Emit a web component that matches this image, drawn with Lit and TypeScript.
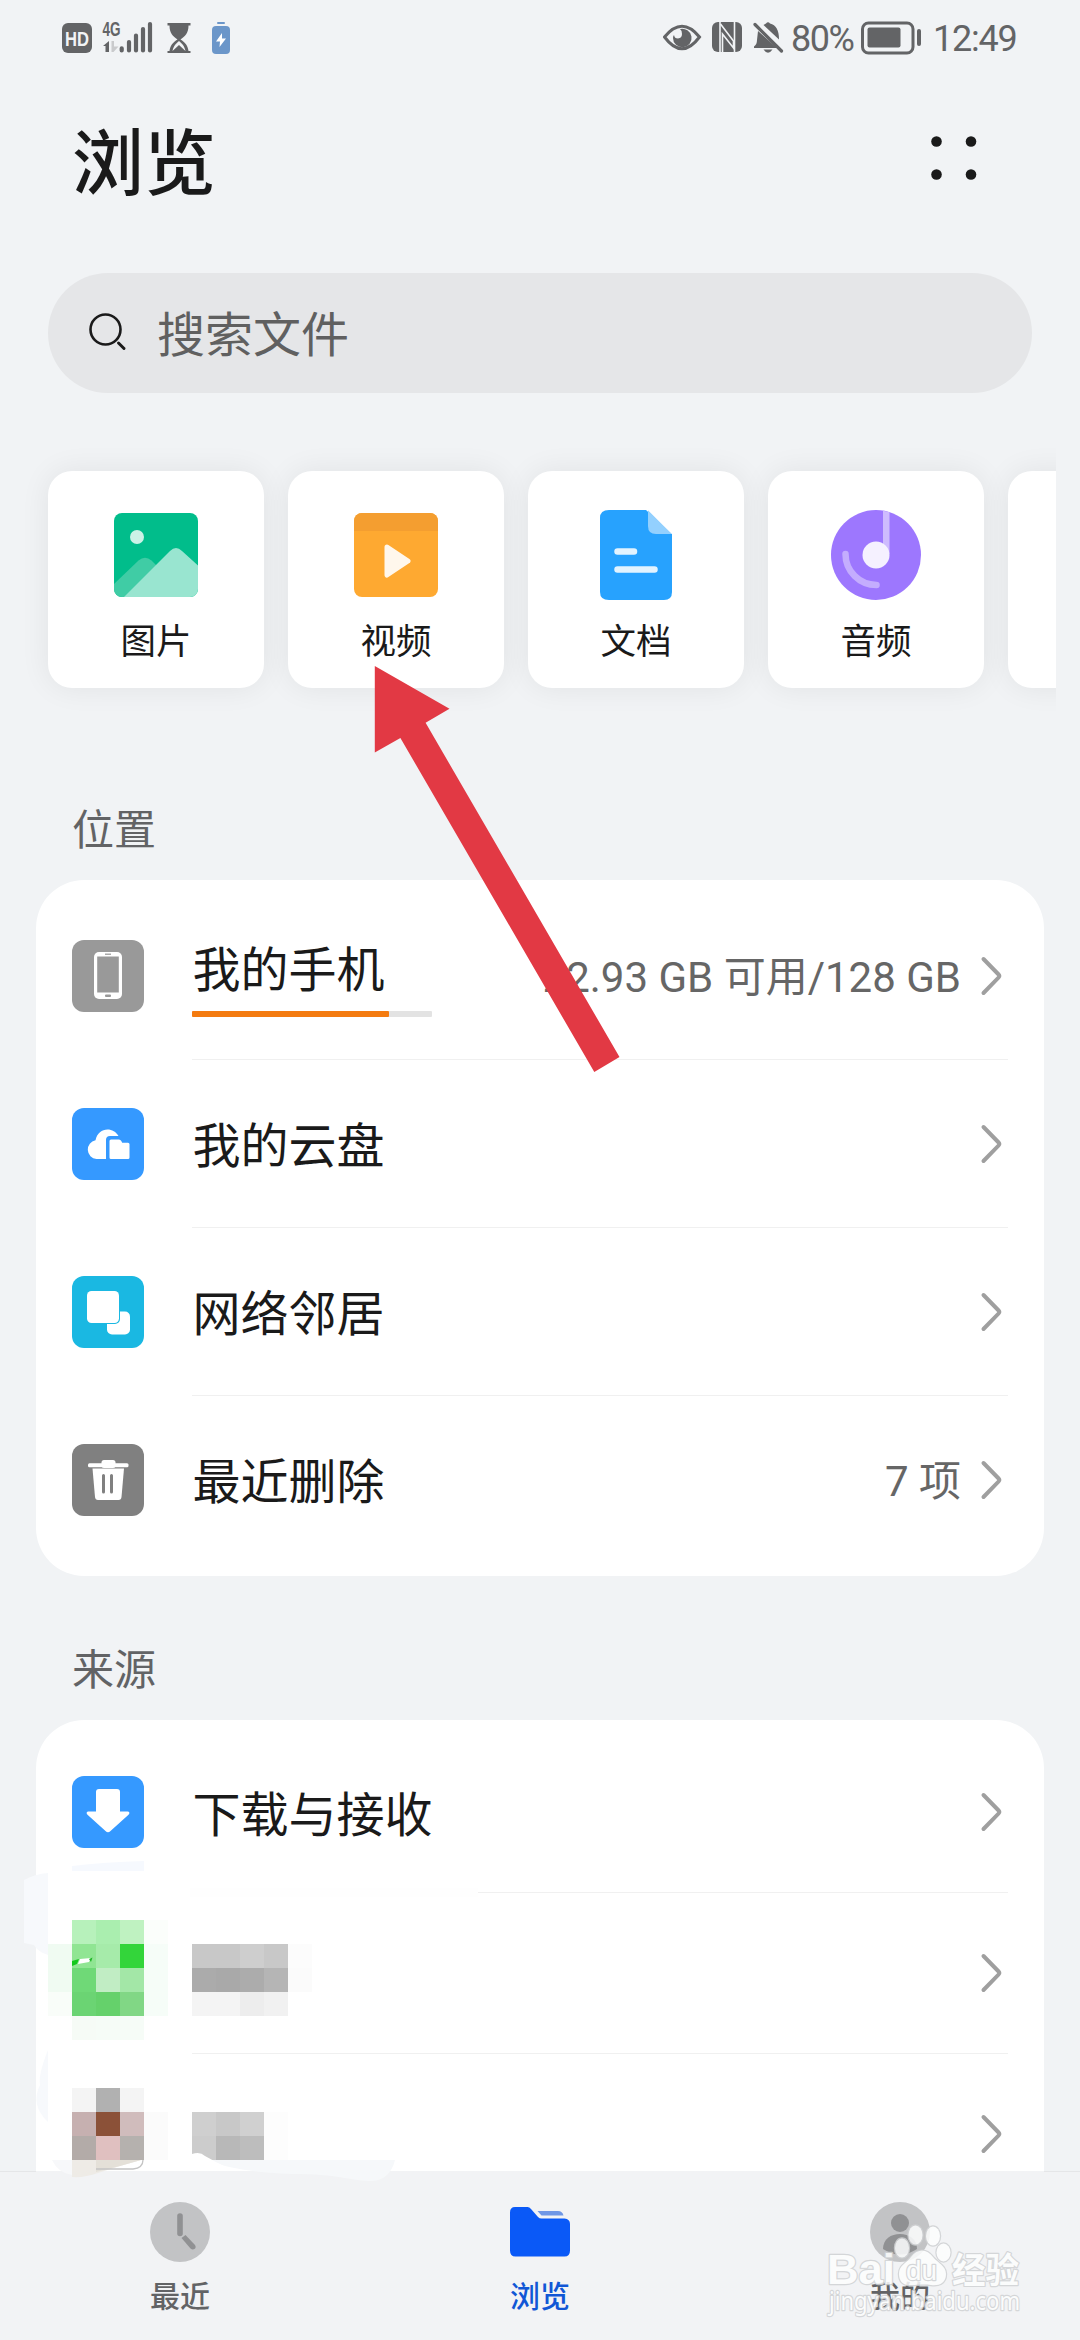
import { LitElement, html, svg, css, nothing } from "lit";
import { customElement, property } from "lit/decorators.js";

type Tile = { label: string; icon: unknown };
type Entry = { label: string; icon?: unknown; value?: string; used?: number };

const tileIcons = {
  picture: svg`
    <clipPath id="pic"><rect x="3" y="3" width="84" height="84" rx="8"/></clipPath>
    <g clip-path="url(#pic)">
      <rect x="3" y="3" width="84" height="84" fill="#01bd8b"/>
      <path d="M0 77 L27.500 50.500 Q34 45 40.500 50.500 L47 57 L18 90 H0Z" fill="#40cca5"/>
      <path d="M12 88 L59 41 Q65 35 71 41 L92 60 V90 H10Z" fill="#99e5d0"/>
      <circle cx="26" cy="27" r="7" fill="#ccf2e7"/>
    </g>`,
  video: svg`
    <clipPath id="vid"><rect x="3" y="3" width="84" height="84" rx="8"/></clipPath>
    <g clip-path="url(#vid)">
      <rect x="3" y="3" width="84" height="84" fill="#fea931"/>
      <rect x="3" y="3" width="84" height="18" fill="#f49e30"/>
    </g>
    <path d="M36 37 L57 51 L36 65Z" fill="#fff7ec" stroke="#fff7ec" stroke-width="5" stroke-linejoin="round"/>`,
  doc: svg`
    <path d="M18 0 H55 L81 24 V82 Q81 90 73 90 H18 Q9 90 9 82 V8 Q9 0 18 0Z" fill="#27a2fe"/>
    <path d="M57 0 L81 24 H65 Q57 24 57 16Z" fill="#93d0fe"/>
    <path d="M57 0 L81 24 V-1Z" fill="#fff"/>
    <path d="M26.500 41.500 H43 M26.500 59.500 H63.500" stroke="#e2f3ff" stroke-width="6.500" stroke-linecap="round"/>`,
  audio: svg`
    <circle cx="45" cy="45" r="45" fill="#9d77fe"/>
    <path d="M52 0.800 Q56 1.500 58.500 2.300 V44 H52Z" fill="#cebbfe"/>
    <path d="M14.500 44 A31 31 0 0 0 45.500 75" fill="none" stroke="#c4adfe" stroke-width="6.500" stroke-linecap="round"/>
    <circle cx="45" cy="45" r="13.500" fill="#f5f1ff"/>`,
};

const rowIcons = {
  phone: svg`
    <rect width="72" height="72" rx="12" fill="#999"/>
    <rect x="22" y="12" width="28" height="47" rx="5" fill="#fff"/>
    <rect x="25.200" y="16.500" width="21.600" height="36" fill="#999"/>
    <rect x="33" y="13.500" width="6" height="1.500" fill="#aaa"/>
    <rect x="33" y="54.500" width="6" height="2.600" rx="1" fill="#999"/>`,
  cloud: svg`
    <rect width="72" height="72" rx="12" fill="#3599ff"/>
    <path d="M34 51 H24.500 A9.500 9.500 0 0 1 23.500 32.200 C25 25 30 21.500 35.500 21.500 C40 21.500 44 23.800 46.500 28 H38 Q34 28 34 32Z" fill="#fff"/>
    <path d="M39 31.500 H47 Q48.500 31.500 49.300 33 L50.200 34.800 H56 Q57.500 34.800 57.500 36.300 V49.500 Q57.500 51 56 51 H39 Q37.500 51 37.500 49.500 V33 Q37.500 31.500 39 31.500Z" fill="#fff"/>`,
  network: svg`
    <rect width="72" height="72" rx="12" fill="#1ab8e2"/>
    <rect x="35" y="35.500" width="23" height="23" rx="5" fill="#fff"/>
    <rect x="14.500" y="14.500" width="33.500" height="33.500" rx="5" fill="#1ab8e2"/>
    <rect x="15" y="15" width="32" height="32" rx="4.500" fill="#fff"/>`,
  trash: svg`
    <rect width="72" height="72" rx="12" fill="#808080"/>
    <rect x="29.500" y="16" width="14" height="8" rx="2.500" fill="#fff"/>
    <rect x="16" y="19.200" width="40.500" height="4" rx="1.500" fill="#fff"/>
    <path d="M20.500 24.500 H52 L49.500 53 Q49.200 56 46.500 56 H26 Q23.300 56 23 53Z" fill="#fff"/>
    <path d="M31.500 31.500 V48 M39.500 31.500 V48" stroke="#808080" stroke-width="3" stroke-linecap="round"/>`,
  download: svg`
    <rect width="72" height="72" rx="12" fill="#3599ff"/>
    <path d="M27 13 H45 Q48 13 48 16 V35.500 H56 Q58.500 36.500 56.500 38.700 L38.500 55 Q36 57.500 33.500 55 L15.500 38.700 Q13.500 36.500 16 35.500 H24 V16 Q24 13 27 13Z" fill="#fff"/>`,
};

@customElement("file-row")
class FileRow extends LitElement {
  @property({ attribute: false }) entry: Entry = { label: "" };

  static styles = css`
    :host { display: flex; align-items: center; box-sizing: border-box; padding: 0 36px; }
    .icon { width: 72px; height: 72px; margin: -1px 48px 0 0; flex: none; }
    .body {
      flex: 1; height: 100%; display: flex; align-items: center; box-sizing: border-box;
      border-bottom: 1px solid #f0f0f0; padding-right: 5px;
    }
    :host([last]) .body { border-bottom-color: transparent; }
    .main { flex: 1; display: flex; flex-direction: column; gap: 15px; margin-bottom: 3px; }
    .main.metered { margin-bottom: 0; }
    .label { font-size: 48px; line-height: 60px; color: #1a1a1a; white-space: nowrap; margin-left: 0.5px; }
    .meter { width: 240px; height: 6px; border-radius: 1px; background: #e3e3e3; margin-bottom: -1px; }
    .used { height: 6px; border-radius: 1px; background: #f47b10; }
    .value {
      font: 42px/60px Roboto, "Noto Sans CJK SC", sans-serif; color: #666; white-space: nowrap;
      margin: 4px 18px 0 0;
    }
    .chevron { width: 24px; height: 42px; flex: none; }
  `;

  render() {
    const { label, icon, value, used } = this.entry;
    const metered = used !== undefined;
    return html`
      <svg class="icon" viewBox="0 0 72 72">${icon ?? nothing}</svg>
      <div class="body">
        <div class="main ${metered ? "metered" : ""}">
          <span class="label">${label}</span>
          ${metered
            ? html`<div class="meter"><div class="used" style="width:${used}%"></div></div>`
            : nothing}
        </div>
        ${value ? html`<span class="value">${value}</span>` : nothing}
        <svg class="chevron" viewBox="0 0 24 42">
          <path d="M4.500 4 L19.600 19.500 Q21 21 19.600 22.500 L4.500 38" fill="none" stroke="#9f9f9f" stroke-width="4" stroke-linecap="round"/>
        </svg>
      </div>`;
  }
}

@customElement("status-bar")
class StatusBar extends LitElement {
  static styles = css`
    :host {
      display: flex; justify-content: space-between; height: 78px; box-sizing: border-box;
      padding: 0 62px; color: #636466;
    }
    .group { display: flex; align-items: center; }
    .glyphs { height: 78px; display: block; flex: none; }
    .text { font: 36px/50px Roboto, sans-serif; white-space: nowrap; flex: none; }
    .hd { font: 700 20px "Liberation Sans", sans-serif; }
    .net { font: 700 20px "Liberation Sans", sans-serif; }
    .percent { width: 70px; letter-spacing: -1.5px; }
    .clock { width: 85px; margin-left: 11px; letter-spacing: -1.2px; }
  `;

  render() {
    return html`
      <div class="group">
        <svg class="glyphs" width="180" viewBox="62 0 180 78" fill="#636466">
          <rect x="62" y="23" width="30" height="30" rx="6"/>
          <text class="hd" x="65" y="45.500" textLength="24" lengthAdjust="spacingAndGlyphs" fill="#f1f3f5">HD</text>
          <text class="net" x="102.500" y="36" textLength="18" lengthAdjust="spacingAndGlyphs">4G</text>
          <path d="M103 46 L109 41 V52 H105.500 V46Z"/>
          <path d="M111.500 41 H114 V46.500 H118.500 L113.500 52 H111.500Z" fill="#c9cacc"/>
          <g stroke="#636466" stroke-width="4.200" stroke-linecap="round">
            <path d="M121.700 48.300 V50.500 M129 42 V50.500 M136 35.500 V50.500 M143 29 V50.500 M150 24 V50.500"/>
          </g>
          <path d="M167.500 23 H190.500 V25.500 H188.500 C188.500 33 185 36.500 180.500 39.500 C185 42 188 46 188.500 51 H190.500 V53 H167.500 V51 H169.500 C170 46 173 42 177.500 39.500 C173 36.500 169.500 33 169.500 25.500 H167.500Z"/>
          <path d="M172.500 51 C173.500 46 176 43.500 179 41 C182 43.500 184.500 46 185.500 51 L179 45Z" fill="#f1f3f5"/>
          <rect x="217" y="22" width="8" height="2" rx="1" fill="#6b96c9"/>
          <rect x="212" y="26" width="18" height="28" rx="4" fill="#6b96c9"/>
          <path d="M222 33 L216 41.500 H220 L219.500 47 L226 38.500 H222Z" fill="#fff"/>
        </svg>
      </div>
      <div class="group">
        <svg class="glyphs" width="128" viewBox="663 0 128 78" fill="#636466">
          <path d="M664.500 37 Q682 15.500 699.500 37 Q682 60.500 664.500 37Z" fill="none" stroke="#636466" stroke-width="3"/>
          <path d="M680 29 A9.300 9.300 0 1 1 673 38 Q673 36 674 35 Q674.500 38.500 678 38.500 Q682 38 682 34 Q682.500 31 680 29Z"/>
          <rect x="712" y="22" width="30" height="30" rx="6"/>
          <path d="M720 22 V52 M734.500 22 V52" stroke="#f1f3f5" stroke-width="1.600"/>
          <path d="M720.500 24 L733.500 41 V48 L722.500 34 V52" fill="none" stroke="#f1f3f5" stroke-width="1.600"/>
          <path d="M766 23.500 Q768 21 770 23.500 C776 25 779 30 779 39.500 L763.500 25Z"/>
          <path d="M758 31 L777 48 H754 V46.500 Q757 44.500 757 40Z"/>
          <path d="M763.500 49.500 H772.500 Q768 56 763.500 49.500Z"/>
          <path d="M755 24.500 L781.500 51" stroke="#636466" stroke-width="3.200" stroke-linecap="round"/>
        </svg>
        <span class="text percent">80%</span>
        <svg class="glyphs" width="61" viewBox="861 0 61 78">
          <rect x="862.500" y="23" width="50.500" height="30" rx="6" fill="none" stroke="#636466" stroke-width="3"/>
          <rect x="867.500" y="27.500" width="33" height="20" rx="2" fill="#636466"/>
          <rect x="917" y="29" width="4" height="17" rx="2" fill="#636466"/>
        </svg>
        <span class="text clock">12:49</span>
      </div>`;
  }
}

@customElement("app-root")
class AppRoot extends LitElement {
  private tiles: Tile[] = [
    { label: "图片", icon: tileIcons.picture },
    { label: "视频", icon: tileIcons.video },
    { label: "文档", icon: tileIcons.doc },
    { label: "音频", icon: tileIcons.audio },
    { label: "", icon: nothing },
  ];

  private places: Entry[] = [
    { label: "我的手机", icon: rowIcons.phone, value: "22.93 GB 可用/128 GB", used: 82 },
    { label: "我的云盘", icon: rowIcons.cloud },
    { label: "网络邻居", icon: rowIcons.network },
    { label: "最近删除", icon: rowIcons.trash, value: "7 项" },
  ];

  private sources: Entry[] = [
    { label: "下载与接收", icon: rowIcons.download },
    { label: "" },
    { label: "" },
  ];

  // Pixelated blocks: x, y and the fills of consecutive 24px cells.
  private mosaic: [number, number, string[]][] = [
    [72, 1920, ["#b7f1bb", "#aaeeaf", "#bff2c1", "#fbfefb"]],
    [48, 1944, ["#f0fbf2", "#90e593", "#a6ebaa", "#33d53a", "#f6fdf8"]],
    [48, 1968, ["#f0fbf2", "#6fd977", "#c1edc4", "#a3e7a7", "#f6fdf8"]],
    [48, 1992, ["#f9fdf9", "#6bd473", "#65d16b", "#81d785", "#f6fdf8"]],
    [72, 2016, ["#f6fbf6", "#f6fcf7", "#f6fcf7"]],
    [192, 1944, ["#c8c8c8", "#c8c8c8", "#cecece", "#c8c8c8", "#fcfcfc"]],
    [192, 1968, ["#ababab", "#a9a9a9", "#acacac", "#b5b5b5", "#fbfbfb"]],
    [192, 1992, ["#f4f4f4", "#f4f4f4", "#ededed", "#f1f1f1"]],
    [72, 2088, ["#f4f4f4", "#b1b1b1", "#f4f4f4"]],
    [72, 2112, ["#c6b0b0", "#8b5138", "#d0bcbc", "#fbfbfb"]],
    [72, 2136, ["#b3aba8", "#e0c0c0", "#b5b1ae", "#fbfbfb"]],
    [192, 2112, ["#cfcfcf", "#c8c8c8", "#d0d0d0", "#fdfdfd"]],
    [192, 2136, ["#cccccc", "#b8b8b8", "#bdbdbd", "#fdfdfd"]],
  ];

  static styles = css`
    :host {
      display: flex; flex-direction: column; position: relative; width: 1080px; height: 2340px;
      overflow: hidden; background: #f1f3f5; color: #1a1a1a;
      font-family: "Noto Sans CJK SC", sans-serif;
    }
    .content { flex: 1; min-height: 0; overflow: hidden; display: flex; flex-direction: column; }
    .content > * { flex: none; }
    .header { display: flex; justify-content: space-between; align-items: center; height: 160px; padding: 0 102px 0 72px; }
    .title { margin: 0; font-size: 72px; font-weight: 500; line-height: 90px; }
    .more { width: 48px; height: 48px; }
    .search {
      display: flex; align-items: center; height: 120px; margin: 35px 48px 0; padding-left: 36px;
      box-sizing: border-box; border-radius: 60px; background: #e5e6e8;
    }
    .lens { width: 48px; height: 48px; margin-right: 24px; }
    .hint { font-size: 48px; line-height: 60px; color: #606060; margin: 0 0 4px 1px; }
    .tiles { display: flex; gap: 24px; height: 265px; box-sizing: border-box; margin: 54px 24px 0 0; padding: 24px 0 0 48px; overflow: hidden; }
    .tile {
      flex: none; width: 216px; height: 217px; border-radius: 24px; background: #fff;
      box-shadow: 0 0 30px rgba(0, 0, 0, 0.07);
      display: flex; flex-direction: column; align-items: center; box-sizing: border-box; padding-top: 39px;
    }
    .tile-icon { width: 90px; height: 90px; }
    .tile-label { margin-top: 13px; font-size: 35.500px; line-height: 52px; }
    .section { height: 144px; box-sizing: border-box; padding: 61px 72px 0; font-size: 42px; line-height: 60px; color: #626365; }
    .section.first { height: 168px; padding-top: 85px; }
    .card { margin: 0 36px; padding: 12px 0; border-radius: 48px; background: #fff; }
    .place { height: 168px; }
    .source { height: 161px; }
    .nav { flex: none; display: flex; height: 169px; background: #f2f3f5; }
    .tab { flex: 1; display: flex; flex-direction: column; align-items: center; padding-top: 31px; font-size: 30px; color: #626365; }
    .tab.active { color: #1157d6; }
    .tab-icon { width: 60px; height: 60px; }
    .tab-label { margin-top: 12px; line-height: 40px; font-weight: 500; }
    .overlay { position: absolute; left: 0; top: 0; width: 1080px; height: 2340px; pointer-events: none; }
    .brand { font: 700 43px "Liberation Sans", "Noto Sans CJK SC", sans-serif; }
    .brand-cjk { font: 700 35px "Noto Sans CJK SC", sans-serif; }
    .brand-small { font: 28px "Liberation Sans", sans-serif; }
    .brand-url { font: 25px "Noto Sans", sans-serif; }
  `;

  render() {
    return html`
      <div class="content">
        <status-bar></status-bar>
        <div class="header">
          <h1 class="title">浏览</h1>
          <svg class="more" viewBox="0 0 48 48" fill="#1a1a1a">
            <circle cx="6.500" cy="7.500" r="5.300"/><circle cx="41" cy="7.500" r="5.300"/>
            <circle cx="6.500" cy="40.500" r="5.300"/><circle cx="41" cy="40.500" r="5.300"/>
          </svg>
        </div>
        <div class="search">
          <svg class="lens" viewBox="0 0 48 48" fill="none" stroke="#1a1a1a" stroke-linecap="round">
            <circle cx="21.500" cy="20.500" r="15" stroke-width="2.600"/>
            <path d="M34.500 34 L40 39.500" stroke-width="3"/>
          </svg>
          <span class="hint">搜索文件</span>
        </div>
        <div class="tiles">
          ${this.tiles.map(
            (t) => html`<div class="tile">
              <svg class="tile-icon" viewBox="0 0 90 90">${t.icon}</svg>
              <span class="tile-label">${t.label}</span>
            </div>`,
          )}
        </div>
        <div class="section first">位置</div>
        <div class="card">
          ${this.places.map(
            (e, i) => html`<file-row class="place" .entry=${e} ?last=${i === this.places.length - 1}></file-row>`,
          )}
        </div>
        <div class="section">来源</div>
        <div class="card">
          ${this.sources.map((e) => html`<file-row class="source" .entry=${e}></file-row>`)}
        </div>
      </div>
      <div class="nav">
        <div class="tab">
          <svg class="tab-icon" viewBox="0 0 60 60">
            <circle cx="30" cy="30" r="30" fill="#c2c3c5"/>
            <path d="M30 14 V31.500" stroke="#909193" stroke-width="5.600" stroke-linecap="round"/>
            <path d="M31.500 36 L35.500 33 L45 43 Q46.500 45.500 44.500 47 Q42.500 48 40.500 46.500Z" fill="#909193"/>
          </svg>
          <span class="tab-label">最近</span>
        </div>
        <div class="tab active">
          <svg class="tab-icon" viewBox="0 0 60 60">
            <path d="M5 5 H17.500 Q19.500 5 21 7 L28 15 Q29.500 16.500 31.500 16.500 H54.500 Q60 17 60 22 V48.500 Q60 54.500 54.500 54.500 H5.500 Q0 54.500 0 48.500 V10.500 Q0 5 5 5Z" fill="#0a59f7"/>
            <path d="M27.500 9 H48 Q52.500 9 53.500 13.500 H31.500Z" fill="#6f97e6"/>
          </svg>
          <span class="tab-label">浏览</span>
        </div>
        <div class="tab">
          <svg class="tab-icon" viewBox="0 0 60 60">
            <circle cx="30" cy="30" r="30" fill="#c2c3c5"/>
            <circle cx="30" cy="21" r="9" fill="#909193"/>
            <path d="M13 47 C13 37 21 32 30 32 C39 32 47 37 47 47 Q30 58 13 47Z" fill="#909193"/>
          </svg>
          <span class="tab-label">我的</span>
        </div>
      </div>

      <svg class="overlay" viewBox="0 0 1080 2340">
        <path d="M0 2171.500 H36 M1044 2171.500 H1080" stroke="#e5e6e8"/>
        <path d="M72 1866 Q105 1862 144 1861 V1871 H72Z" fill="#f6f9fe"/>
        <path d="M190 1888 H478 V1897 H190Z" fill="#fefefe"/>
        <path d="M24 1880 Q35 1874 48 1873 V1955 Q38 1952 34 1945 L24 1943Z" fill="#f7f9fc"/>
        <path d="M48 2050 Q38 2075 40 2085 Q30 2105 48 2122Z" fill="#f7f9fc"/>
        ${this.mosaic.map(([x, y, cells]) =>
          cells.map((c, i) => svg`<rect x=${x + i * 24} y=${y} width="24" height="24" fill=${c} shape-rendering="crispEdges"/>`),
        )}
        <path d="M72 1961 L79 1959 L77 1964 L72 1966Z" fill="#14c81c"/>
        <path d="M80 1959 L91 1958 L89 1962 L78 1964Z" fill="#fff"/>
        <path d="M89 1959 L92.500 1957.500 L91 1962Z" fill="#22b82a"/>
        <path d="M48 1960 H72 V1969 Q50 1975 48 1992Z" fill="#f0fbf2"/>
        <path d="M72 2160 H141 L120 2166 L98 2173 Q84 2178 72 2177Z" fill="#eeebe6"/>
        <path d="M96 2160 H141 L120 2166 L96 2172Z" fill="#e4e0d8"/>
        <path d="M52 2160 H72 V2175 Q58 2173 52 2160Z" fill="#f7f8fa"/>
        <path d="M96 2169 H133 Q143 2168 143 2160" fill="none" stroke="#c4c4c4" stroke-width="1.300"/>
        <path d="M206 2160 H395 Q390 2180 372 2181 C350 2181 345 2175 300 2174 C255 2173 235 2169 214 2163Z" fill="#f6f8fa"/>
        <path d="M192 2154 Q200 2151 205 2156 L216 2162 L226 2167 H192Z" fill="#fff"/>

        <path d="M374.800 666 L449.500 708.700 L425.600 722.800 L619.500 1057 L594.300 1072 L400.400 738 L374.800 752.500Z" fill="#e23944"/>

        <g fill="#fdfefe" stroke="#cfd1d3" stroke-width="2.400" paint-order="stroke" stroke-linejoin="round" opacity="0.85">
          <text class="brand" x="827" y="2284" textLength="68" lengthAdjust="spacingAndGlyphs">Bai</text>
          <ellipse cx="902" cy="2248" rx="7" ry="9.500"/>
          <ellipse cx="915.500" cy="2235" rx="7" ry="9.500"/>
          <ellipse cx="933" cy="2236" rx="7" ry="9.500"/>
          <ellipse cx="943.500" cy="2252.500" rx="7" ry="9"/>
          <path d="M911 2257 C918 2248 927 2249 933 2257 C938 2263 946 2266 946 2274 C946 2284 938 2286 931 2285 C924 2284 918 2285 911 2285 C903 2286 899 2281 899 2274 C899 2265 906 2264 911 2257Z"/>
          <text class="brand-cjk" x="952" y="2283" textLength="67" lengthAdjust="spacingAndGlyphs">经验</text>
          <text class="brand-url" x="829" y="2310" textLength="191" lengthAdjust="spacingAndGlyphs">jingyan.baidu.com</text>
          <text class="brand-small" x="906" y="2280" textLength="31" lengthAdjust="spacingAndGlyphs">du</text>
        </g>
      </svg>`;
  }
}
